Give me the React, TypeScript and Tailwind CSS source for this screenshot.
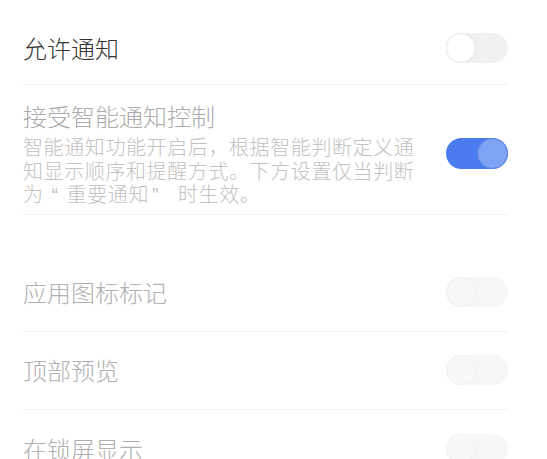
import React from "react";

const font = { fontFamily: '"Noto Sans CJK SC", "Noto Sans", sans-serif' };
const quoteFont = { fontFamily: '"Liberation Sans", Arial, sans-serif' };

function Toggle({ on = false, faded = false }: { on?: boolean; faded?: boolean }) {
  if (on) {
    return (
      <div className="relative h-[31px] w-[62px] shrink-0 rounded-full bg-[#4a7cf0]">
        <div className="absolute right-0 top-0 h-[31px] w-[31px] rounded-full border border-[#5f86e6] bg-[#7ea3f3]" />
      </div>
    );
  }
  return (
    <div
      className={
        "relative h-[30px] w-[62px] shrink-0 rounded-full " +
        (faded ? "bg-[#f6f6f6]" : "bg-[#f1f1f1]")
      }
    >
      <div
        className={
          "absolute left-0 top-0 h-[30px] w-[30px] rounded-full " +
          (faded
            ? "border border-[#f1f1f1] bg-[#f8f8f8]"
            : "border border-[#ececec] bg-white shadow-[0_0_2px_rgba(0,0,0,0.06)]")
        }
      />
    </div>
  );
}

function Divider() {
  return <div className="h-px w-full bg-[#f2f2f2]" />;
}

export default function App() {
  return (
    <div className="h-[459px] w-[547px] overflow-hidden bg-white font-light" style={font}>
      <div className="pl-[23px] pr-[39px] pt-[12px]">
        <div className="flex h-[72px] items-center justify-between">
          <span className="text-[24px] leading-[28px] text-[#333333]">允许通知</span>
          <Toggle />
        </div>
        <Divider />
        <div className="flex items-center justify-between pb-[8px] pt-[17px]">
          <div className="w-[400px]">
            <div className="text-[24px] leading-[28px] text-[#ababab]">接受智能通知控制</div>
            <div className="mt-[5px] text-[20px] leading-[23.5px] tracking-[0.6px] text-[#c2c2c2]">
              智能通知功能开启后，根据智能判断定义通知显示顺序和提醒方式。下方设置仅当判断为<span className="inline-block w-[23px] text-center leading-none" style={quoteFont}>“</span>重要通知<span className="inline-block w-[29px] pl-[3px] text-left leading-none" style={quoteFont}>”</span>时生效。
            </div>
          </div>
          <Toggle on />
        </div>
        <Divider />
        <div className="h-[38px]" />
        <div className="flex h-[78px] items-center justify-between">
          <span className="text-[24px] leading-[28px] text-[#b0b0b0]">应用图标标记</span>
          <Toggle faded />
        </div>
        <Divider />
        <div className="flex h-[77px] items-center justify-between">
          <span className="text-[24px] leading-[28px] text-[#b0b0b0]">顶部预览</span>
          <Toggle faded />
        </div>
        <Divider />
        <div className="flex h-[78px] items-center justify-between">
          <span className="text-[24px] leading-[28px] text-[#b0b0b0]">在锁屏显示</span>
          <Toggle faded />
        </div>
      </div>
    </div>
  );
}
